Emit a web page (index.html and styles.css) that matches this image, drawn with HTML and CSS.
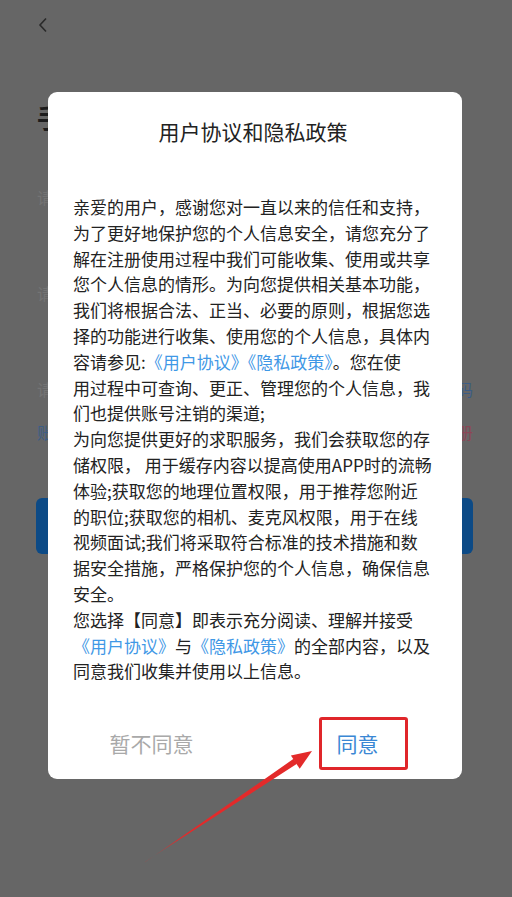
FILE: index.html
```html
<!DOCTYPE html>
<html lang="zh-CN">
<head>
<meta charset="utf-8">
<title>用户协议和隐私政策</title>
<link rel="stylesheet" href="styles.css">
</head>
<body>
<div class="page">
  <div class="back">
    <svg width="10" height="16" viewBox="0 0 10 16"><path d="M8 1.5 L2 8 L8 14.5" fill="none" stroke="#2a2a2a" stroke-width="1.6"/></svg>
  </div>
  <h1 class="heading">手机号登录</h1>
  <div class="field">请输入手机号</div>
  <div class="field">请输入图形验证码</div>
  <div class="field row"><span>请输入短信验证码</span><span class="code">获取验证码</span></div>
  <div class="links"><span class="alt">账号密码登录</span><span class="reg">注册</span></div>
  <div class="login-btn">登录</div>
</div>

<div class="dialog">
  <div class="title">用户协议和隐私政策</div>
  <div class="body">亲爱的用户，感谢您对一直以来的信任和支持，<br>为了更好地保护您的个人信息安全，请您充分了<br>解在注册使用过程中我们可能收集、使用或共享<br>您个人信息的情形。为向您提供相关基本功能，<br>我们将根据合法、正当、必要的原则，根据您选<br>择的功能进行收集、使用您的个人信息，具体内<br>容请参见:<span class="link">《用户协议》《隐私政策》</span>。您在使<br>用过程中可查询、更正、管理您的个人信息，我<br>们也提供账号注销的渠道;<br>为向您提供更好的求职服务，我们会获取您的存<br>储权限， 用于缓存内容以提高使用APP时的流畅<br>体验;获取您的地理位置权限，用于推荐您附近<br>的职位;获取您的相机、麦克风权限，用于在线<br>视频面试;我们将采取符合标准的技术措施和数<br>据安全措施，严格保护您的个人信息，确保信息<br>安全。<br>您选择【同意】即表示充分阅读、理解并接受<br><span class="link">《用户协议》</span>与<span class="link">《隐私政策》</span>的全部内容，以及<br>同意我们收集并使用以上信息。</div>
  <div class="actions">
    <div class="cell"><span class="disagree">暂不同意</span></div>
    <div class="cell"><span class="agree">同意</span></div>
  </div>
</div>

<svg class="arrow" width="512" height="897" viewBox="0 0 512 897">
  <defs>
    <linearGradient id="fade" x1="145" y1="862" x2="300" y2="760" gradientUnits="userSpaceOnUse">
      <stop offset="0" stop-color="#e32a2a" stop-opacity="0.3"/>
      <stop offset="0.25" stop-color="#e32a2a" stop-opacity="1"/>
      <stop offset="1" stop-color="#e32a2a" stop-opacity="1"/>
    </linearGradient>
  </defs>
  <polygon points="144.6,862.6 145.4,861.4 297.0,763.8 293.6,758.8" fill="url(#fade)"/>
  <polygon points="312,751 299.7,768.8 290.9,755.4" fill="#e32a2a"/>
</svg>
</body>
</html>
```

FILE: styles.css
```css
html, body {
  margin: 0;
  padding: 0;
}
body {
  width: 512px;
  height: 897px;
  overflow: hidden;
  background: #666666;
  font-family: "Noto Sans CJK SC", "Noto Sans", sans-serif;
  position: relative;
}
.page {
  padding: 17px 39px 0 37px;
}
.back {
  height: 16px;
  padding-left: 1px;
}
.back svg {
  display: block;
}
.heading {
  margin: 66px 0 0 0;
  font-size: 26px;
  line-height: 36px;
  font-weight: 700;
  color: #1c1c1c;
}
.field {
  margin-top: 50px;
  font-size: 16px;
  line-height: 24px;
  color: #747474;
  height: 46px;
}
.field:first-of-type {
  margin-top: 40px;
}
.row {
  display: flex;
  justify-content: space-between;
}
.code {
  color: #3b5d86;
}
.links {
  display: flex;
  justify-content: space-between;
  font-size: 16px;
  line-height: 24px;
  margin-top: -3px;
}
.alt {
  color: #3b5d86;
}
.reg {
  color: #8a4656;
}
.login-btn {
  margin-top: 54px;
  height: 56px;
  margin-left: -1px;
  border-radius: 6px;
  background: #0c4a86;
  color: #5f7f9f;
  text-align: center;
  line-height: 56px;
  font-size: 18px;
}
.dialog {
  position: absolute;
  left: 48px;
  top: 92px;
  width: 414px;
  height: 687px;
  background: #ffffff;
  border-radius: 9px;
  box-sizing: border-box;
  padding-top: 24px;
}
.title {
  text-align: center;
  font-size: 21px;
  line-height: 30px;
  color: #222222;
  padding-right: 4px;
}
.body {
  margin-top: 48px;
  padding-left: 25px;
  font-size: 17px;
  line-height: 25.8px;
  color: #222222;
  white-space: nowrap;
}
.link {
  color: #3f98e6;
}
.actions {
  display: flex;
  margin-top: 33px;
  height: 53px;
}
.cell {
  flex: 1;
  display: flex;
  justify-content: center;
  align-items: center;
}
.disagree {
  font-size: 21px;
  color: #a9a9a9;
  line-height: 53px;
}
.agree {
  font-size: 21px;
  color: #3a87d4;
  border: 3px solid #e0262a;
  border-radius: 3px;
  box-sizing: border-box;
  height: 53px;
  line-height: 47px;
  padding: 0 26px 0 15px;
  margin-left: 9px;
}
.arrow {
  position: absolute;
  left: 0;
  top: 0;
  pointer-events: none;
}
```
